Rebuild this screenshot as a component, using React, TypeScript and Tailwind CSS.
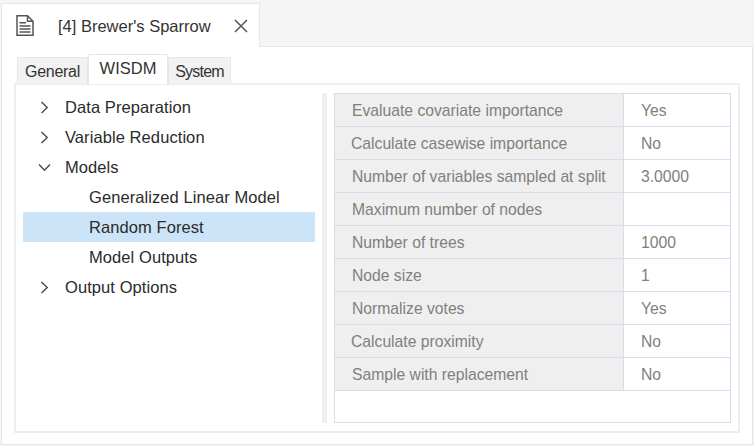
const rows = [
  { label: "Evaluate covariate importance", value: "Yes", indent: "pl-[17px]" },
  { label: "Calculate casewise importance", value: "No", indent: "pl-[16px]" },
  { label: "Number of variables sampled at split", value: "3.0000", indent: "pl-[17px]" },
  { label: "Maximum number of nodes", value: "", indent: "pl-[17px]" },
  { label: "Number of trees", value: "1000", indent: "pl-[17px]" },
  { label: "Node size", value: "1", indent: "pl-[17px]" },
  { label: "Normalize votes", value: "Yes", indent: "pl-[17px]" },
  { label: "Calculate proximity", value: "No", indent: "pl-[16px]" },
  { label: "Sample with replacement", value: "No", indent: "pl-[17px]" },
];

const tree = [
  { label: "Data Preparation", level: 0, icon: "closed" },
  { label: "Variable Reduction", level: 0, icon: "closed" },
  { label: "Models", level: 0, icon: "open" },
  { label: "Generalized Linear Model", level: 1 },
  { label: "Random Forest", level: 1, selected: true },
  { label: "Model Outputs", level: 1 },
  { label: "Output Options", level: 0, icon: "closed" },
];

const DocIcon = () => (
  <svg width="18" height="21" viewBox="0 0 18 21" fill="none" stroke="#555" strokeWidth="1.5">
    <path d="M1 .8H11.5L17 6.3V20.2H1Z" />
    <path d="M11.5 .8V6.3H17" />
    <path d="M3.5 7.7H10M3.5 11H14.5M3.5 14H14.5M3.5 17H14.5" />
  </svg>
);

const CloseIcon = () => (
  <svg width="14" height="14" viewBox="0 0 14 14" fill="none" stroke="#555" strokeWidth="1.5">
    <path d="M1 1L13 13M13 1L1 13" />
  </svg>
);

const ChevronClosed = () => (
  <svg width="9" height="13" viewBox="0 0 9 13" fill="none" stroke="#4a4a4a" strokeWidth="1.4">
    <path d="M1.5 1L7.2 6.5L1.5 12" />
  </svg>
);

const ChevronOpen = () => (
  <svg width="13" height="9" viewBox="0 0 13 9" fill="none" stroke="#4a4a4a" strokeWidth="1.4">
    <path d="M1 1.5L6.5 7.2L12 1.5" />
  </svg>
);

export default function App() {
  return (
    <div className="w-[754px] h-[446px] bg-[#f5f5f5] pt-[3px] pl-[1px] pr-[1px] pb-[1px] flex flex-col text-[16px] text-[#3c3c3c] font-['Liberation_Sans',sans-serif] overflow-hidden">
      {/* document tab */}
      <div className="relative z-10 -mb-px w-[259px] h-[44px] shrink-0 bg-white border border-b-0 border-[#e6e6e6] flex items-center pl-[14px]">
        <DocIcon />
        <span className="ml-[24px] w-[176px] pt-[1px] whitespace-nowrap text-[#333] text-[16.5px]">[4] Brewer's Sparrow</span>
        <CloseIcon />
      </div>

      <div className="flex-1 min-h-0 bg-white border border-[#e6e6e6] pl-[12px] pr-[12px] pb-[11px] flex flex-col">
        {/* inner tabs */}
        <div className="h-[37px] shrink-0 flex items-end pl-[3px] relative z-10 -mb-px">
          <div className="w-[71px] h-[27px] pt-[1px] bg-[#f2f2f2] border border-b-0 border-[#e6e6e6] flex items-center justify-center text-[#333] tracking-[-0.3px]">General</div>
          <div className="w-[80px] h-[30px] bg-white border border-b-0 border-[#e6e6e6] flex items-center justify-center pb-[3px] text-[#333] text-[16.5px]">WISDM</div>
          <div className="w-[63px] h-[27px] pt-[1px] bg-[#f2f2f2] border border-b-0 border-[#e6e6e6] flex items-center justify-center text-[#333] tracking-[-0.8px]">System</div>
        </div>

        <div className="flex-1 min-h-0 border-2 border-[#eeeeee] flex pl-[7px] pr-[7px] pt-[8px] pb-[8px]">
          {/* tree */}
          <div className="w-[292px] shrink-0 -mt-px flex flex-col text-[16.5px]">
            {tree.map((item) => (
              <div
                key={item.label}
                className={`h-[30px] flex items-center whitespace-nowrap text-[#2b2b2b] ${item.selected ? "bg-[#cce4f7]" : ""}`}
              >
                <span className="w-[42px] shrink-0 flex justify-center pl-[1px]">
                  {item.icon === "closed" && <ChevronClosed />}
                  {item.icon === "open" && <ChevronOpen />}
                </span>
                <span className={`tracking-[0.08px] ${item.level === 1 ? "pl-[24px]" : ""}`}>{item.label}</span>
              </div>
            ))}
          </div>

          {/* splitter */}
          <div className="w-[5px] ml-[7px] mr-[7px] shrink-0 bg-[#f0f0f0]" />

          {/* property grid */}
          <div className="flex-1 border border-[#d4deec] bg-white flex flex-col text-[#808080] text-[15.7px]">
            {rows.map((row) => (
              <div key={row.label} className="h-[33px] shrink-0 flex border-b border-[#d4deec] whitespace-nowrap">
                <div className={`w-[289px] shrink-0 bg-[#efefef] border-r border-[#d4deec] flex items-center pt-[1px] ${row.indent}`}>{row.label}</div>
                <div className="flex-1 flex items-center pt-[1px] pl-[17px]">{row.value}</div>
              </div>
            ))}
          </div>
        </div>
      </div>
    </div>
  );
}
